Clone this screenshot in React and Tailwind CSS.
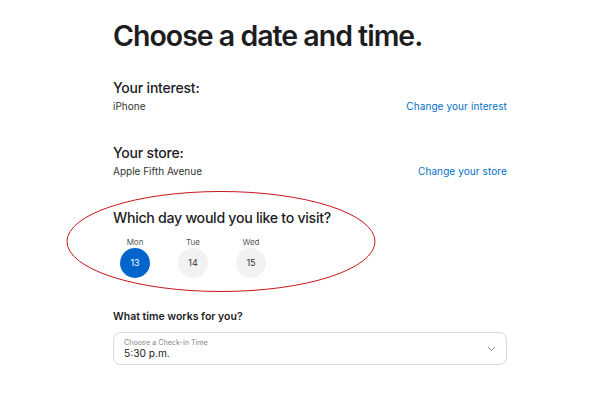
import React, { useState } from 'react';

const days = [
  { label: 'Mon', num: 13 },
  { label: 'Tue', num: 14 },
  { label: 'Wed', num: 15 },
];

const App = () => {
  const [selected, setSelected] = useState(13);

  return (
    <div className="relative w-[600px] h-[400px] bg-white overflow-hidden" style={{ fontFamily: 'Inter, "Liberation Sans", sans-serif' }}>
      <div className="w-[394px] ml-[113px] pt-[16px] text-[#1d1d1f]">
        <h1 className="text-[28.5px] leading-[40px] font-semibold tracking-[-1px]">Choose a date and time.</h1>

        <div className="mt-[22px]">
          <h2 className="text-[14px] leading-[20px] font-medium tracking-[-0.2px]">Your interest:</h2>
          <div className="flex justify-between items-center mt-[1px] text-[10px] leading-[14px]">
            <span className="text-[#333]">iPhone</span>
            <a className="text-[#0070c9] tracking-[0.1px]">Change your interest</a>
          </div>
        </div>

        <div className="mt-[30px]">
          <h2 className="text-[14px] leading-[20px] font-medium tracking-[-0.2px]">Your store:</h2>
          <div className="flex justify-between items-center mt-[1px] text-[10px] leading-[14px]">
            <span className="text-[#333]">Apple Fifth Avenue</span>
            <a className="text-[#0070c9] tracking-[0.1px]">Change your store</a>
          </div>
        </div>

        <div className="mt-[29px]">
          <h2 className="text-[14.2px] leading-[22px] font-medium tracking-[-0.3px]">Which day would you like to visit?</h2>
          <div className="flex gap-[28px] mt-[8px] ml-[7px]">
            {days.map((d) => (
              <button key={d.num} onClick={() => setSelected(d.num)} className="flex flex-col items-center gap-[1px]">
                <span className="text-[8px] leading-[10px] text-[#555]">{d.label}</span>
                <span
                  className={
                    d.num === selected
                      ? 'w-[30px] h-[30px] rounded-full flex items-center justify-center text-[9px] bg-[#0066cc] text-white'
                      : 'w-[30px] h-[30px] rounded-full flex items-center justify-center text-[9px] bg-[#f2f2f4] text-[#333]'
                  }
                >
                  {d.num}
                </span>
              </button>
            ))}
          </div>
        </div>

        <div className="mt-[31px]">
          <h3 className="text-[10.5px] leading-[16px] font-semibold">What time works for you?</h3>
          <div className="mt-[7px] h-[33px] border border-[#d9d9d9] rounded-[8px] flex items-center justify-between px-[10px]">
            <div className="flex flex-col">
              <span className="text-[7.2px] leading-[9px] text-[#888]">Choose a Check-in Time</span>
              <span className="text-[10.2px] leading-[13px]">5:30 p.m.</span>
            </div>
            <svg width="9" height="6" viewBox="0 0 9 6" fill="none" stroke="#888" strokeWidth="1">
              <path d="M1 1l3.5 3.5L8 1" />
            </svg>
          </div>
        </div>
      </div>

      <svg className="absolute left-0 top-0 pointer-events-none" width="600" height="400">
        <ellipse cx="221" cy="241.5" rx="154" ry="50" fill="none" stroke="#c8151b" strokeWidth="1" />
      </svg>
    </div>
  );
};

export default App;
